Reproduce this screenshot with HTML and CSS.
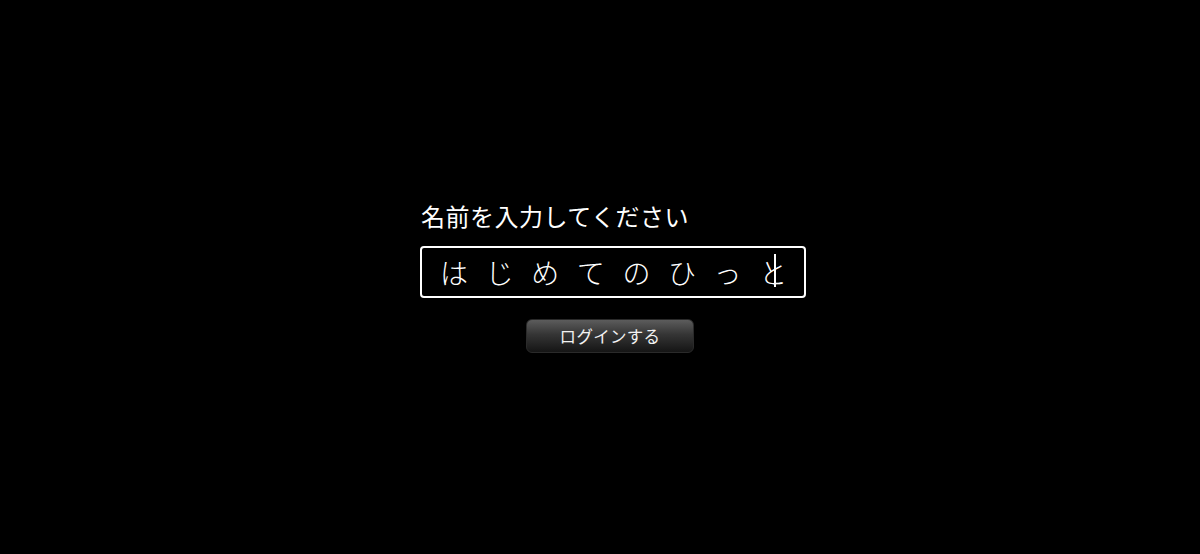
FILE: index.html
```html
<!DOCTYPE html>
<html lang="ja">
<head>
    <meta charset="UTF-8">
    <meta name="viewport" content="width=device-width, initial-scale=1.0">
    <title>ログイン</title>
    <link rel="stylesheet" href="styles.css">
</head>
<body>
    <div class="login">
        <p class="login-label">名前を入力してください</p>
        <div class="name-field">
            <span class="name-text">はじめてのひっ</span><span class="name-last">と<span class="caret"></span></span>
        </div>
        <button class="login-button">ログインする</button>
    </div>
</body>
</html>
```

FILE: styles.css
```css
html, body {
    margin: 0;
    height: 100%;
}

body {
    display: flex;
    justify-content: center;
    align-items: center;
    background: #000;
    color: #fff;
    font-family: "Noto Sans CJK JP", "Noto Sans", sans-serif;
}

.login {
    display: flex;
    flex-direction: column;
    align-items: flex-start;
    padding-left: 26px; /* whole block sits a bit right of center */
    padding-bottom: 4px;
}

.login-label {
    margin: 0 0 12px 1px;
    font-size: 24px;
    line-height: 36px;
    letter-spacing: 0.5px;
}

.name-field {
    box-sizing: border-box;
    width: 386px;
    height: 52px;
    border: 2px solid #fff;
    border-radius: 4px;
    padding: 0 0 0 18px;
    display: flex;
    align-items: center;
    font-size: 28px;
    font-weight: 300;
    letter-spacing: 17.6px;
    white-space: nowrap;
}

.name-last {
    position: relative;
    letter-spacing: 0;
}

/* text cursor drawn over the last character */
.caret {
    position: absolute;
    left: 15px;
    top: 2px;
    width: 2px;
    height: 33px;
    background: #fff;
}

.login-button {
    align-self: center;
    margin: 21px 6px 0 0;
    width: 168px;
    height: 34px;
    border: 1px solid #2a2a2a;
    border-radius: 6px;
    background: linear-gradient(to bottom, #5c5c5c 0%, #353535 45%, #151515 100%);
    color: #f2f2f2;
    font-family: "Noto Sans CJK JP", "Noto Sans", sans-serif;
    font-size: 16.5px;
    letter-spacing: 0.3px;
    cursor: pointer;
}
```
